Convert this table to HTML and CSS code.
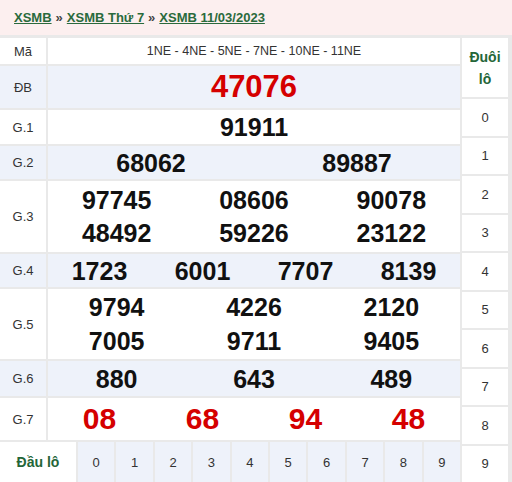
FILE: index.html
```html
<!DOCTYPE html>
<html lang="vi">
<head>
<meta charset="utf-8">
<link rel="stylesheet" href="styles.css">
</head>
<body>
<div class="crumb">
  <a href="#">XSMB</a><span class="sep">»</span><a href="#">XSMB Thứ 7</a><span class="sep">»</span><a href="#">XSMB 11/03/2023</a>
</div>
<div class="board">
  <div class="results">
    <div class="lbl">Mã</div>
    <div class="val code">1NE - 4NE - 5NE - 7NE - 10NE - 11NE</div>

    <div class="lbl alt">ĐB</div>
    <div class="val alt"><div class="nums c1 db"><span>47076</span></div></div>

    <div class="lbl">G.1</div>
    <div class="val"><div class="nums c1"><span>91911</span></div></div>

    <div class="lbl alt">G.2</div>
    <div class="val alt"><div class="nums c2"><span>68062</span><span>89887</span></div></div>

    <div class="lbl">G.3</div>
    <div class="val"><div class="nums c3 l33"><span>97745</span><span>08606</span><span>90078</span><span>48492</span><span>59226</span><span>23122</span></div></div>

    <div class="lbl alt">G.4</div>
    <div class="val alt"><div class="nums c4"><span>1723</span><span>6001</span><span>7707</span><span>8139</span></div></div>

    <div class="lbl">G.5</div>
    <div class="val"><div class="nums c3 l34"><span>9794</span><span>4226</span><span>2120</span><span>7005</span><span>9711</span><span>9405</span></div></div>

    <div class="lbl alt">G.6</div>
    <div class="val alt"><div class="nums c3"><span>880</span><span>643</span><span>489</span></div></div>

    <div class="lbl">G.7</div>
    <div class="val"><div class="nums c4 red"><span>08</span><span>68</span><span>94</span><span>48</span></div></div>

    <div class="heads">
      <div class="hlbl">Đầu lô</div>
      <div class="hd">0</div><div class="hd">1</div><div class="hd">2</div><div class="hd">3</div><div class="hd">4</div>
      <div class="hd">5</div><div class="hd">6</div><div class="hd">7</div><div class="hd">8</div><div class="hd">9</div>
    </div>
  </div>
  <div class="tails">
    <div class="thead">Đuôi lô</div>
    <div class="td">0</div><div class="td">1</div><div class="td">2</div><div class="td">3</div><div class="td">4</div>
    <div class="td">5</div><div class="td">6</div><div class="td">7</div><div class="td">8</div><div class="td">9</div>
  </div>
</div>
</body>
</html>
```

FILE: styles.css
```css
html, body {
  margin: 0;
  padding: 0;
  background: #ffffff;
  font-family: "Liberation Sans", Arial, sans-serif;
  color: #333;
}

.crumb {
  height: 35px;
  line-height: 35px;
  background: #fcefef;
  padding-left: 14px;
  font-size: 13px;
  font-weight: bold;
  white-space: nowrap;
}

.crumb a {
  color: #2a6a3c;
  text-decoration: underline;
}

.crumb .sep {
  color: #444;
  padding: 0 4px;
}

.board {
  display: flex;
  gap: 2px;
  background: #e9e9e9;
  padding-top: 3px;
  padding-right: 4px;
}

.results {
  width: 460px;
  display: grid;
  grid-template-columns: 46px 412px;
  grid-template-rows: 26px 42px 34px 33px 71px 33px 70px 35px 42px 40px;
  gap: 2px;
}

.lbl {
  background: #fff;
  font-size: 13px;
  color: #333;
  display: flex;
  align-items: center;
  justify-content: center;
}

.val {
  background: #fff;
  display: flex;
  align-items: center;
}

.alt {
  background: #eef2fa;
}

.code {
  justify-content: center;
  font-size: 12.5px;
  color: #333;
}

.nums {
  width: 100%;
  display: grid;
  font-size: 25px;
  font-weight: bold;
  color: #111;
  text-align: center;
  line-height: 32px;
}

.nums span {
  display: block;
}

.c1 { grid-template-columns: 1fr; }
.c2 { grid-template-columns: repeat(2, 1fr); }
.c3 { grid-template-columns: repeat(3, 1fr); }
.c4 { grid-template-columns: repeat(4, 1fr); }

.l33 { line-height: 33px; }
.l34 { line-height: 34px; }

.db {
  font-size: 31px;
  color: #d50000;
}

.red {
  font-size: 30px;
  color: #d50000;
}

.heads {
  grid-column: 1 / span 2;
  display: grid;
  grid-template-columns: 76px repeat(10, 1fr);
  gap: 2px;
}

.hlbl {
  background: #fff;
  font-size: 14px;
  font-weight: bold;
  color: #246638;
  display: flex;
  align-items: center;
  justify-content: center;
}

.hd {
  background: #eef2fa;
  font-size: 13px;
  color: #333;
  display: flex;
  align-items: center;
  justify-content: center;
}

.tails {
  width: 46px;
  display: flex;
  flex-direction: column;
  gap: 2px;
}

.thead {
  height: 59px;
  flex: none;
  background: #fff;
  font-size: 14px;
  font-weight: bold;
  color: #246638;
  line-height: 22px;
  text-align: center;
  display: flex;
  align-items: center;
  justify-content: center;
  padding: 0 4px;
}

.td {
  flex: 1;
  background: #fff;
  font-size: 13px;
  color: #333;
  display: flex;
  align-items: center;
  justify-content: center;
}
```
